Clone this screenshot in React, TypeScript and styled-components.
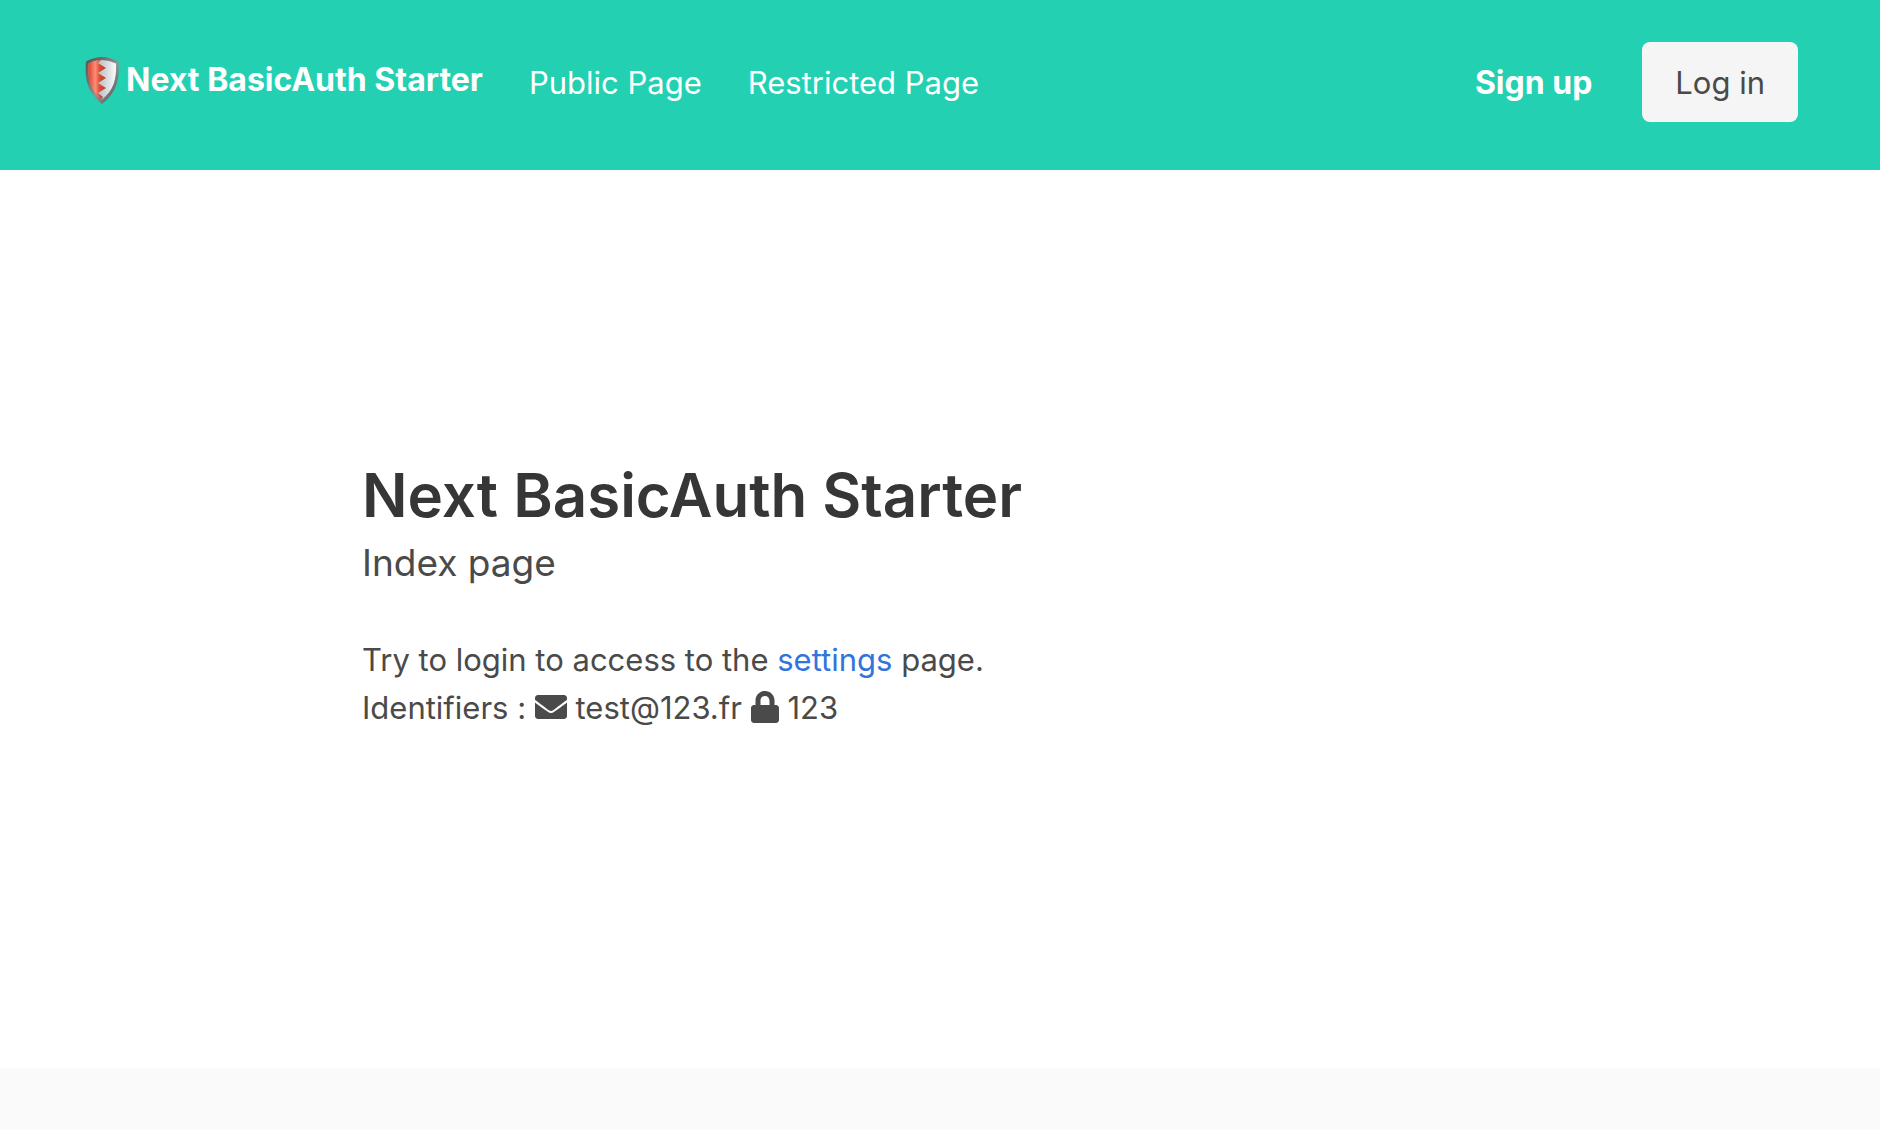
import React from "react";
import styled, { createGlobalStyle } from "styled-components";

const GlobalStyle = createGlobalStyle`
  *, *::before, *::after { box-sizing: border-box; }
  body {
    margin: 0;
    background: #fff;
    color: #4a4a4a;
    font-family: Inter, "Liberation Sans", sans-serif;
    font-size: 31px;
    line-height: 48px;
  }
`;

const Page = styled.div`
  display: flex;
  flex-direction: column;
  min-height: 100vh;
`;

const Navbar = styled.header`
  display: flex;
  justify-content: space-between;
  padding: 30px 82px 36px;
  background: #23d1b2;
`;

const Brand = styled.a`
  display: flex;
  align-items: center;
  gap: 6px;
  padding-bottom: 4px;
  color: #fff;
  font-size: 32px;
  font-weight: 700;
  text-decoration: none;
`;

const Shield = styled.svg`
  width: 38px;
  height: 48px;
`;

const NavGroup = styled.nav<{ $gap: number }>`
  display: flex;
  align-items: center;
  gap: ${({ $gap }) => $gap}px;
  height: 104px;
`;

const NavLink = styled.a<{ $bold?: boolean }>`
  padding-top: 2px;
  color: #fff;
  font-size: ${({ $bold }) => ($bold ? 32 : 31)}px;
  font-weight: ${({ $bold }) => ($bold ? 700 : 400)};
  text-decoration: none;
`;

const LoginButton = styled.button`
  height: 80px;
  padding: 2px 33px 0;
  border: 0;
  border-radius: 8px;
  background: #f5f5f5;
  color: #4a4a4a;
  font: inherit;
  cursor: pointer;
`;

const Hero = styled.main`
  display: flex;
  flex: 1;
  flex-direction: column;
  justify-content: center;
  padding: 48px;
`;

const Container = styled.div`
  width: 100%;
  max-width: 1156px;
  margin: 0 auto;
`;

const Title = styled.h1`
  margin: 0;
  color: #363636;
  font-size: 60px;
  font-weight: 600;
  line-height: 74px;
`;

const Subtitle = styled.h2`
  margin: 6px 0 48px;
  font-size: 37px;
  font-weight: 400;
  line-height: 50px;
`;

const Text = styled.p`
  margin: 0 0 48px;
`;

const TextLink = styled.a`
  color: #3273dc;
  text-decoration: none;
`;

const Glyph = styled.svg<{ $width: number }>`
  width: ${({ $width }) => $width}px;
  height: 32px;
  vertical-align: -4px;
  fill: currentColor;
`;

const Footer = styled.footer`
  height: 62px;
  background: #fafafa;
`;

function ShieldLogo() {
  return (
    <Shield viewBox="0 0 38 48" aria-hidden="true">
      <defs>
        <linearGradient id="rim" x1="0" y1="0" x2="1" y2="1">
          <stop offset="0" stopColor="#555" />
          <stop offset="0.3" stopColor="#70706f" />
          <stop offset="0.55" stopColor="#929495" />
          <stop offset="1" stopColor="#484848" />
        </linearGradient>
        <linearGradient id="red" x1="0" y1="0" x2="1" y2="0">
          <stop offset="0" stopColor="#d9432f" />
          <stop offset="0.4" stopColor="#ff8c77" />
          <stop offset="0.65" stopColor="#d94b33" />
          <stop offset="1" stopColor="#b83b28" />
        </linearGradient>
        <linearGradient id="silver" x1="0" y1="0" x2="1" y2="0">
          <stop offset="0.3" stopColor="#b4b9bd" />
          <stop offset="0.65" stopColor="#d4d9dd" />
          <stop offset="1" stopColor="#fafafa" />
        </linearGradient>
      </defs>
      <path d="M4 5.500Q12 1 20 1T36.500 5.500C37.500 23 35 36 20 48C5 36 2.500 23 4 5.500Z" fill="url(#rim)" />
      <path d="M6.500 7.500Q13 4 20 4T34 7.500C34.500 23 32 34 20 43.500C8 34 5.500 23 6.500 7.500Z" fill="url(#silver)" />
      <path d="M6.500 7.500Q13 4 19 4L16 7L24 12L16 17L24 22L16 27L24 32L16 37L21 41L19.500 43.300C8 34 5.500 23 6.500 7.500Z" fill="url(#red)" />
    </Shield>
  );
}

function EnvelopeIcon() {
  return (
    <Glyph $width={32} viewBox="0 0 512 512" aria-hidden="true">
      <path d="M502.300 190.800c3.900-3.100 9.700-.2 9.700 4.700V400c0 26.500-21.500 48-48 48H48c-26.500 0-48-21.500-48-48V195.600c0-5 5.700-7.800 9.700-4.700 22.400 17.400 52.100 39.500 154.100 113.600 21.100 15.400 56.700 47.800 92.200 47.600 35.700.3 72-32.800 92.300-47.600 102-74.100 131.600-96.300 154-113.700zM256 320c23.200.4 56.600-29.200 73.400-41.400 132.700-96.300 142.800-104.700 173.400-128.700 5.800-4.500 9.200-11.500 9.200-18.900v-19c0-26.500-21.500-48-48-48H48c-26.500 0-48 21.500-48 48v19c0 7.400 3.400 14.300 9.200 18.900 30.600 23.900 40.700 32.400 173.400 128.700 16.800 12.200 50.200 41.800 73.400 41.400z" />
    </Glyph>
  );
}

function LockIcon() {
  return (
    <Glyph $width={28} viewBox="0 0 448 512" aria-hidden="true">
      <path d="M400 224h-24v-72C376 68.200 307.800 0 224 0S72 68.200 72 152v72H48c-26.500 0-48 21.500-48 48v192c0 26.500 21.500 48 48 48h352c26.500 0 48-21.500 48-48V272c0-26.500-21.500-48-48-48zm-104 0H152v-72c0-39.700 32.300-72 72-72s72 32.300 72 72v72z" />
    </Glyph>
  );
}

export default function App() {
  return (
    <>
      <GlobalStyle />
      <Page>
        <Navbar>
          <NavGroup $gap={46}>
            <Brand href="#home">
              <ShieldLogo />
              Next BasicAuth Starter
            </Brand>
            <NavLink href="#public">Public Page</NavLink>
            <NavLink href="#restricted">Restricted Page</NavLink>
          </NavGroup>
          <NavGroup $gap={50}>
            <NavLink href="#signup" $bold>Sign up</NavLink>
            <LoginButton type="button">Log in</LoginButton>
          </NavGroup>
        </Navbar>
        <Hero>
          <Container>
            <Title>Next BasicAuth Starter</Title>
            <Subtitle>Index page</Subtitle>
            <Text>
              Try to login to access to the <TextLink href="#settings">settings</TextLink> page.
              <br />
              Identifiers : <EnvelopeIcon /> test@123.fr <LockIcon /> 123
            </Text>
          </Container>
        </Hero>
        <Footer />
      </Page>
    </>
  );
}
